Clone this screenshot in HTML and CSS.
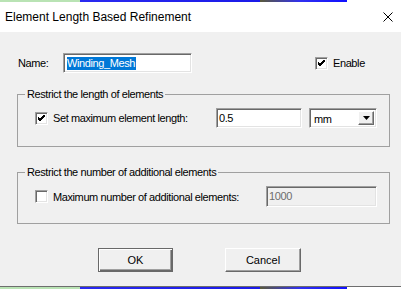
FILE: index.html
```html
<!DOCTYPE html>
<html lang="en">
<head>
    <meta charset="UTF-8">
    <title>Element Length Based Refinement</title>
    <link rel="stylesheet" href="styles.css">
</head>
<body>
    <div class="desk desk-top"></div>
    <div class="dialog">
        <div class="titlebar">
            <span class="title">Element Length Based Refinement</span>
            <svg class="close" width="10" height="10" viewBox="0 0 10 10">
                <path d="M0.5 0.5 L9.5 9.5 M9.5 0.5 L0.5 9.5" stroke="#000" stroke-width="1" fill="none"/>
            </svg>
        </div>

        <div class="client">
            <div class="name-row">
                <span class="lbl name-lbl">Name:</span>
                <div class="edit name-edit"><span class="sel">Winding_Mesh</span></div>
                <label class="check enable">
                    <span class="box">
                        <svg width="7" height="7" viewBox="0 0 7 7"><path d="M0 2 L2 4 L7 -1 M0 3 L2 5 L7 0 M0 4 L2 6 L7 1" stroke="#000" stroke-width="1" fill="none"/></svg>
                    </span>
                    Enable
                </label>
            </div>

            <fieldset class="group g-length">
                <legend>Restrict the length of elements</legend>
                <div class="opt-row">
                    <label class="check">
                        <span class="box">
                            <svg width="7" height="7" viewBox="0 0 7 7"><path d="M0 2 L2 4 L7 -1 M0 3 L2 5 L7 0 M0 4 L2 6 L7 1" stroke="#000" stroke-width="1" fill="none"/></svg>
                        </span>
                        Set maximum element length:
                    </label>
                    <div class="edit len-edit">0.5</div>
                    <div class="combo">
                        <span class="combo-text">mm</span>
                        <span class="drop">
                            <svg width="7" height="4" viewBox="0 0 7 4"><path d="M0 0 H7 L3.5 4 Z" fill="#000"/></svg>
                        </span>
                    </div>
                </div>
            </fieldset>

            <fieldset class="group g-count">
                <legend>Restrict the number of additional elements</legend>
                <div class="opt-row">
                    <label class="check">
                        <span class="box"></span>
                        Maximum number of additional elements:
                    </label>
                    <div class="edit count-edit disabled">1000</div>
                </div>
            </fieldset>

            <div class="buttons">
                <button class="btn default">OK</button>
                <button class="btn">Cancel</button>
            </div>
        </div>
        <div class="frame-bottom"></div>
    </div>
    <div class="desk desk-bottom"></div>
</body>
</html>
```

FILE: styles.css
```css
* {
    box-sizing: border-box;
    margin: 0;
    padding: 0;
}

body {
    width: 401px;
    height: 289px;
    overflow: hidden;
    background-color: #f0f0f0;
    font-family: "Liberation Sans", Arial, sans-serif;
    font-size: 11px;
    letter-spacing: -0.4px;
    color: #000;
}

/* bits of the application behind the dialog */
.desk {
    height: 2px;
    background: linear-gradient(90deg, #b9e3b4 0, #b9e3b4 80px, #2a2af0 80px, #1a1ae8 260px, #5a5a3a 260px, #3030f0 300px, #1010ff 347px, #ffffff 347px);
}

.dialog {
    display: flex;
    flex-direction: column;
    height: 285px;
}

.titlebar {
    height: 30px;
    background-color: #fff;
    display: flex;
    align-items: center;
    justify-content: space-between;
    padding: 0 8px 0 5px;
}

.title {
    font-family: "Liberation Sans", Arial, sans-serif;
    font-size: 12px;
    letter-spacing: 0;
    padding-bottom: 1px;
}

.client {
    flex: 1;
    background-color: #f0f0f0;
    padding: 21px 0 0 17px;
}

.frame-bottom {
    height: 1px;
    background-color: #6e6e6e;
}

/* name row */
.name-row {
    display: flex;
    align-items: center;
    height: 20px;
}

.name-lbl {
    width: 46px;
    padding-left: 1px;
}

.edit {
    height: 20px;
    background-color: #fff;
    border-top: 1px solid #a0a0a0;
    border-left: 1px solid #a0a0a0;
    border-right: 1px solid #fff;
    border-bottom: 1px solid #fff;
    box-shadow: inset 1px 1px 0 #696969, inset -1px -1px 0 #e3e3e3;
    padding: 3px 0 0 3px;
    line-height: 13px;
    white-space: nowrap;
}

.name-edit {
    width: 129px;
}

.sel {
    background-color: #0078d7;
    color: #fff;
    display: inline-block;
    padding-right: 1px;
}

.check {
    display: flex;
    align-items: center;
    white-space: nowrap;
}

.box {
    width: 13px;
    height: 13px;
    background-color: #fff;
    border-top: 1px solid #a0a0a0;
    border-left: 1px solid #a0a0a0;
    border-right: 1px solid #fff;
    border-bottom: 1px solid #fff;
    box-shadow: inset 1px 1px 0 #696969, inset -1px -1px 0 #e3e3e3;
    display: flex;
    align-items: center;
    justify-content: center;
    margin-right: 5px;
}

.enable {
    margin-left: 123px;
}

/* group boxes */
.group {
    width: 373px;
    border: 1px solid #a0a0a0;
    padding: 0 0 0 7px;
}

.group legend {
    padding: 0 2px;
    line-height: 13px;
}

.g-length {
    margin-top: 15px;
}

.g-length .opt-row {
    padding: 7px 0 18px 10px;
}

.g-count {
    margin-top: 19px;
}

.g-count .opt-row {
    padding: 7px 0 16px 10px;
}

.opt-row {
    display: flex;
    align-items: center;
}

.g-length .check {
    width: 181px;
}

.g-count .check {
    width: 231px;
}

.len-edit {
    width: 86px;
    padding-left: 2px;
}

.combo {
    width: 68px;
    height: 20px;
    margin-left: 7px;
    background-color: #fff;
    border-top: 1px solid #a0a0a0;
    border-left: 1px solid #a0a0a0;
    border-right: 1px solid #fff;
    border-bottom: 1px solid #fff;
    box-shadow: inset 1px 1px 0 #696969, inset -1px -1px 0 #e3e3e3;
    display: flex;
    padding: 2px;
}

.combo-text {
    flex: 1;
    padding: 2px 0 0 2px;
}

.drop {
    width: 16px;
    background-color: #f0f0f0;
    border-top: 1px solid #fff;
    border-left: 1px solid #fff;
    border-right: 1px solid #696969;
    border-bottom: 1px solid #696969;
    box-shadow: inset -1px -1px 0 #a0a0a0;
    display: flex;
    align-items: center;
    justify-content: center;
}

.count-edit {
    width: 111px;
    height: 21px;
    background-color: #f0f0f0;
    color: #6d6d6d;
    padding-left: 2px;
}

/* buttons */
.buttons {
    display: flex;
    margin-top: 24px;
    padding-left: 81px;
    gap: 52px;
}

.btn {
    height: 24px;
    width: 76px;
    font-family: "Liberation Sans", Arial, sans-serif;
    font-size: 11px;
    background-color: #f0f0f0;
    border-top: 1px solid #fff;
    border-left: 1px solid #fff;
    border-right: 1px solid #696969;
    border-bottom: 1px solid #696969;
    box-shadow: inset -1px -1px 0 #a0a0a0;
    color: #000;
}

.btn.default {
    width: 75px;
    border: 1px solid #696969;
    box-shadow: inset 1px 1px 0 #fff, inset -1px -1px 0 #696969, inset -2px -2px 0 #a0a0a0;
}
```
